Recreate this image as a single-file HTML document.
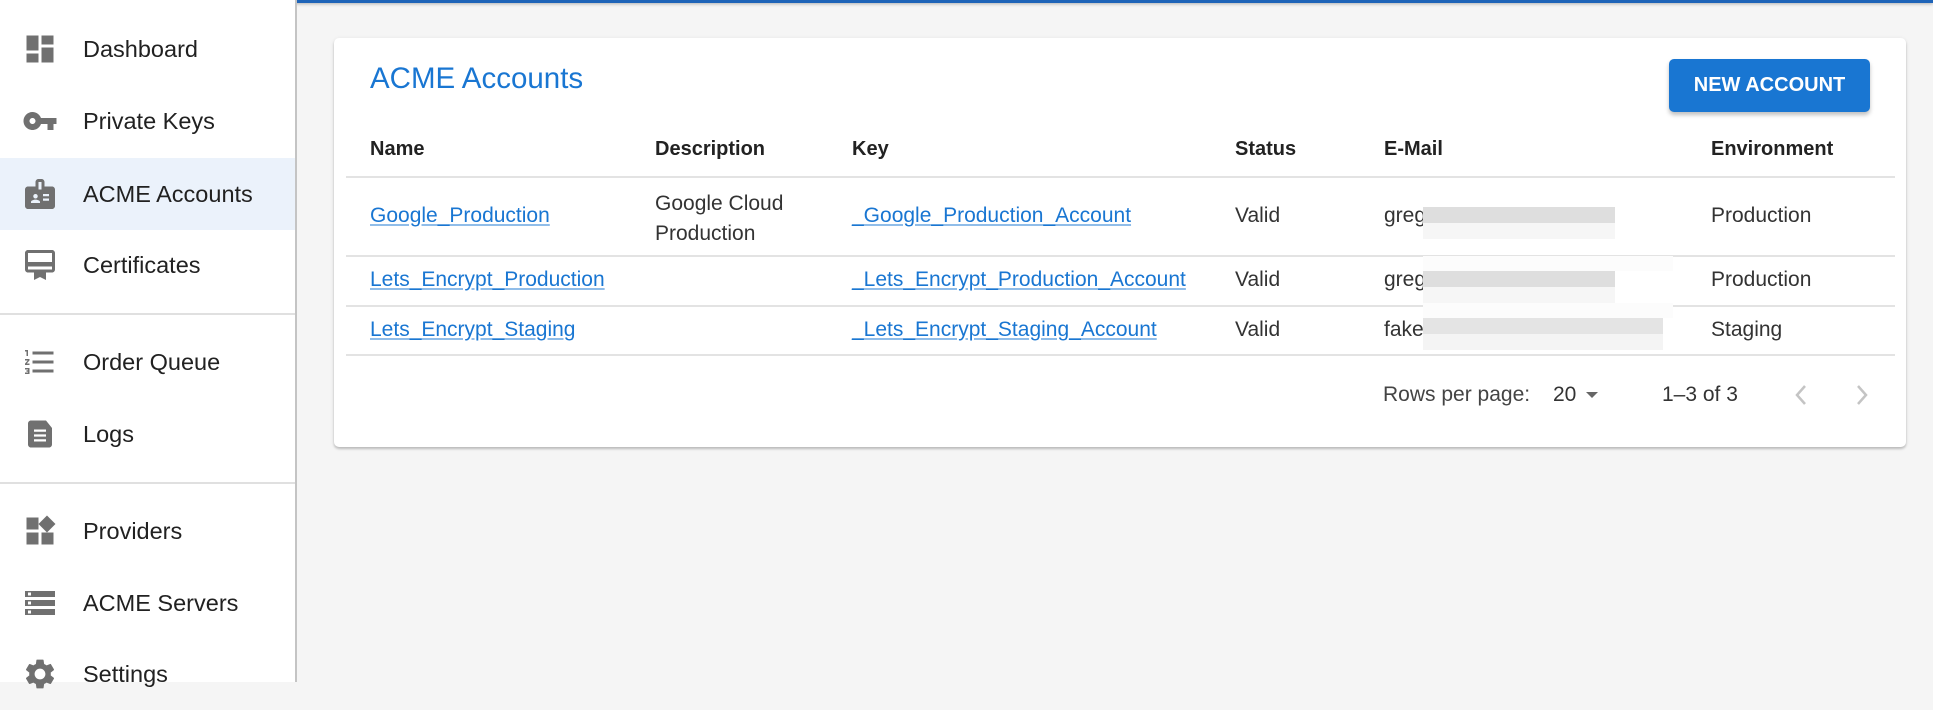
<!DOCTYPE html>
<html style="background:#f5f5f5"><head><meta charset="utf-8"><style>
*{box-sizing:border-box;margin:0;padding:0}
body{width:1933px;height:682px;overflow:hidden;background:#f5f5f5;font-family:"Liberation Sans",sans-serif;position:relative}
.top{position:absolute;left:0;top:0;width:1933px;height:3px;background:#1e64b8;box-shadow:0 1px 3px rgba(0,0,0,.3)}
.side{position:absolute;left:0;top:0;width:297px;height:682px;background:#fff;border-right:2px solid #c4c4c4}
.nav{position:absolute;left:0;width:295px;height:72px}
.nav svg{position:absolute;left:22px;top:18px;width:36px;height:36px;fill:#707070}
.nav span{position:absolute;left:83px;top:0;line-height:72px;font-size:23.5px;color:#212121}
.sel{background:#ebf2fb}
.div{position:absolute;left:0;width:295px;height:2px;background:#e0e0e0}
.card{position:absolute;left:334px;top:38px;width:1572px;height:409px;background:#fff;border-radius:5px;box-shadow:0 2px 2px rgba(0,0,0,.18),0 1px 4px rgba(0,0,0,.1)}
.title{position:absolute;left:370px;top:62px;font-size:29.5px;color:#1976d2}
.btn{position:absolute;left:1669px;top:59px;width:201px;height:53px;background:#1976d2;border-radius:5px;color:#fff;font-weight:bold;font-size:20px;text-align:center;line-height:53px;box-shadow:0 3px 4px rgba(0,0,0,.25)}
.t{position:absolute;font-size:21px;color:#333;white-space:nowrap}
.h{font-weight:bold;font-size:20px;color:#222}
a.t{color:#1976d2;text-decoration:underline;text-decoration-color:#90bde9}
.ln{position:absolute;left:346px;width:1549px;height:2px;background:#e3e3e3}
.px{position:absolute}
</style></head><body>
<div class="top"></div>
<div class="side">
<div class="nav" style="top:13px"><svg viewBox="0 0 24 24"><path d="M3 13h8V3H3v10zm0 8h8v-6H3v6zm10 0h8V11h-8v10zm0-18v6h8V3h-8z"/></svg><span>Dashboard</span></div>
<div class="nav" style="top:85px"><svg viewBox="0 0 24 24"><path d="M12.65 10C11.83 7.67 9.61 6 7 6c-3.310 0-6 2.69-6 6s2.69 6 6 6c2.61 0 4.83-1.670 5.65-4H17v4h4v-4h2v-4H12.65zM7 14c-1.1 0-2-.9-2-2s.9-2 2-2 2 .9 2 2-.9 2-2 2z"/></svg><span>Private Keys</span></div>
<div class="nav sel" style="top:158px"><svg viewBox="0 0 24 24"><path d="M20 7h-5V4c0-1.1-.9-2-2-2h-2c-1.1 0-2 .9-2 2v3H4c-1.1 0-2 .9-2 2v11c0 1.1.9 2 2 2h16c1.1 0 2-.9 2-2V9c0-1.1-.9-2-2-2zM9 12c.83 0 1.5.67 1.5 1.5S9.83 15 9 15s-1.5-.67-1.5-1.5S8.17 12 9 12zm3 6H6v-.75c0-1 2-1.5 3-1.5s3 .5 3 1.5V18zm1-9h-2V4h2v5zm5 7.5h-4V15h4v1.5zm0-3h-4V12h4v1.5z"/></svg><span>ACME Accounts</span></div>
<div class="nav" style="top:229px"><svg viewBox="0 0 24 24"><path d="M20 2H4c-1.11 0-2 .89-2 2v11c0 1.11.89 2 2 2h4v5l4-2 4 2v-5h4c1.11 0 2-.89 2-2V4c0-1.11-.89-2-2-2zm0 13H4v-2h16v2zm0-5H4V4h16v6z"/></svg><span>Certificates</span></div>
<div class="div" style="top:313px"></div>
<div class="nav" style="top:326px"><svg viewBox="0 0 24 24"><path d="M2 17h2v.5H3v1h1v.5H2v1h3v-4H2v1zm1-9h1V4H2v1h1v3zm-1 3h1.8L2 13.1v.9h3v-1H3.2L5 10.9V10H2v1zm5-6v2h14V5H7zm0 14h14v-2H7v2zm0-6h14v-2H7v2z"/></svg><span>Order Queue</span></div>
<div class="nav" style="top:398px"><svg viewBox="0 0 24 24"><path d="M16 3H6C4.9 3 4 3.9 4 5v14c0 1.1.9 2 2 2h12c1.1 0 2-.9 2-2V8l-4-5zm0 14H8v-1.5h8V17zm0-3.25H8v-1.5h8v1.5zM16 10.5H8V9h8v1.5z"/></svg><span>Logs</span></div>
<div class="div" style="top:482px"></div>
<div class="nav" style="top:495px"><svg viewBox="0 0 24 24"><path d="M13 13v8h8v-8h-8zM3 21h8v-8H3v8zM3 3v8h8V3H3zm13.66-1.31L11 7.34 16.66 13l5.66-5.66-5.66-5.65z"/></svg><span>Providers</span></div>
<div class="nav" style="top:567px"><svg viewBox="0 0 24 24"><path d="M2 20h20v-4H2v4zm2-3h2v2H4v-2zM2 4v4h20V4H2zm4 3H4V5h2v2zm-4 7h20v-4H2v4zm2-3h2v2H4v-2z"/></svg><span>ACME Servers</span></div>
<div class="nav" style="top:638px"><svg viewBox="0 0 24 24"><path d="M19.14 12.94c.04-.3.06-.61.06-.94 0-.32-.02-.64-.07-.94l2.030-1.58a.49.49 0 00.12-.61l-1.92-3.32a.488.488 0 00-.59-.22l-2.39.96c-.5-.38-1.03-.7-1.62-.94l-.36-2.54a.484.484 0 00-.48-.41h-3.84c-.24 0-.43.17-.47.41l-.36 2.54c-.59.24-1.13.57-1.62.94l-2.39-.96c-.22-.08-.47 0-.59.22L2.74 8.87c-.12.21-.08.47.12.61l2.03 1.58c-.05.3-.09.63-.09.94s.02.64.07.94l-2.03 1.58a.49.49 0 00-.12.61l1.92 3.32c.12.22.37.29.59.22l2.39-.96c.5.38 1.03.7 1.62.94l.36 2.54c.05.24.24.41.48.41h3.84c.24 0 .44-.17.47-.41l.36-2.54c.59-.24 1.13-.56 1.62-.94l2.39.96c.22.08.47 0 .59-.22l1.92-3.32c.12-.22.07-.47-.12-.61l-2.01-1.58zM12 15.6c-1.98 0-3.6-1.62-3.6-3.6s1.62-3.6 3.6-3.6 3.6 1.62 3.6 3.6-1.62 3.6-3.6 3.6z"/></svg><span>Settings</span></div>
</div>

<div class="card"></div>
<div class="title">ACME Accounts</div>
<div class="btn">NEW ACCOUNT</div>

<div class="t h" style="left:370px;top:138px">Name</div>
<div class="t h" style="left:655px;top:138px">Description</div>
<div class="t h" style="left:852px;top:138px">Key</div>
<div class="t h" style="left:1235px;top:138px">Status</div>
<div class="t h" style="left:1384px;top:138px">E-Mail</div>
<div class="t h" style="left:1711px;top:138px">Environment</div>
<div class="ln" style="top:176px"></div>

<a class="t" style="left:370px;top:204px">Google_Production</a>
<div class="t" style="left:655px;top:189px;line-height:30px">Google Cloud<br>Production</div>
<a class="t" style="left:852px;top:204px">_Google_Production_Account</a>
<div class="t" style="left:1235px;top:204px">Valid</div>
<div class="t" style="left:1384px;top:204px">greg</div>
<div class="t" style="left:1711px;top:204px">Production</div>
<div class="ln" style="top:255px"></div>

<a class="t" style="left:370px;top:268px">Lets_Encrypt_Production</a>
<a class="t" style="left:852px;top:268px">_Lets_Encrypt_Production_Account</a>
<div class="t" style="left:1235px;top:268px">Valid</div>
<div class="t" style="left:1384px;top:268px">greg</div>
<div class="t" style="left:1711px;top:268px">Production</div>
<div class="ln" style="top:305px"></div>

<a class="t" style="left:370px;top:318px">Lets_Encrypt_Staging</a>
<a class="t" style="left:852px;top:318px">_Lets_Encrypt_Staging_Account</a>
<div class="t" style="left:1235px;top:318px">Valid</div>
<div class="t" style="left:1384px;top:318px">fake</div>
<div class="t" style="left:1711px;top:318px">Staging</div>
<div class="ln" style="top:354px"></div>

<div class="px" style="left:1423px;top:207px;width:192px;height:16px;background:#dedede"></div>
<div class="px" style="left:1423px;top:223px;width:192px;height:16px;background:#f6f6f6"></div>
<div class="px" style="left:1423px;top:256px;width:250px;height:15px;background:#fcfcfc"></div>
<div class="px" style="left:1423px;top:271px;width:192px;height:16px;background:#dedede"></div>
<div class="px" style="left:1423px;top:287px;width:192px;height:16px;background:#f6f6f6"></div>
<div class="px" style="left:1423px;top:303px;width:250px;height:15px;background:#fcfcfc"></div>
<div class="px" style="left:1423px;top:318px;width:240px;height:16px;background:#e4e4e4"></div>
<div class="px" style="left:1423px;top:334px;width:240px;height:16px;background:#f4f4f4"></div>

<div class="t" style="left:1383px;top:383px;color:#444">Rows per page:</div>
<div class="t" style="left:1553px;top:383px;color:#333">20</div>
<svg class="px" style="left:1584px;top:390px" width="16" height="10" viewBox="0 0 16 10"><path d="M2 2h12L8 8z" fill="#666"/></svg>
<div class="t" style="left:1662px;top:383px;color:#333">1–3 of 3</div>
<svg class="px" style="left:1791px;top:382px" width="20" height="26" viewBox="0 0 20 26"><path d="M14 4L6 13l8 9" stroke="#c4c4c4" stroke-width="2.5" fill="none"/></svg>
<svg class="px" style="left:1852px;top:382px" width="20" height="26" viewBox="0 0 20 26"><path d="M6 4l8 9-8 9" stroke="#c4c4c4" stroke-width="2.5" fill="none"/></svg>
</body></html>
